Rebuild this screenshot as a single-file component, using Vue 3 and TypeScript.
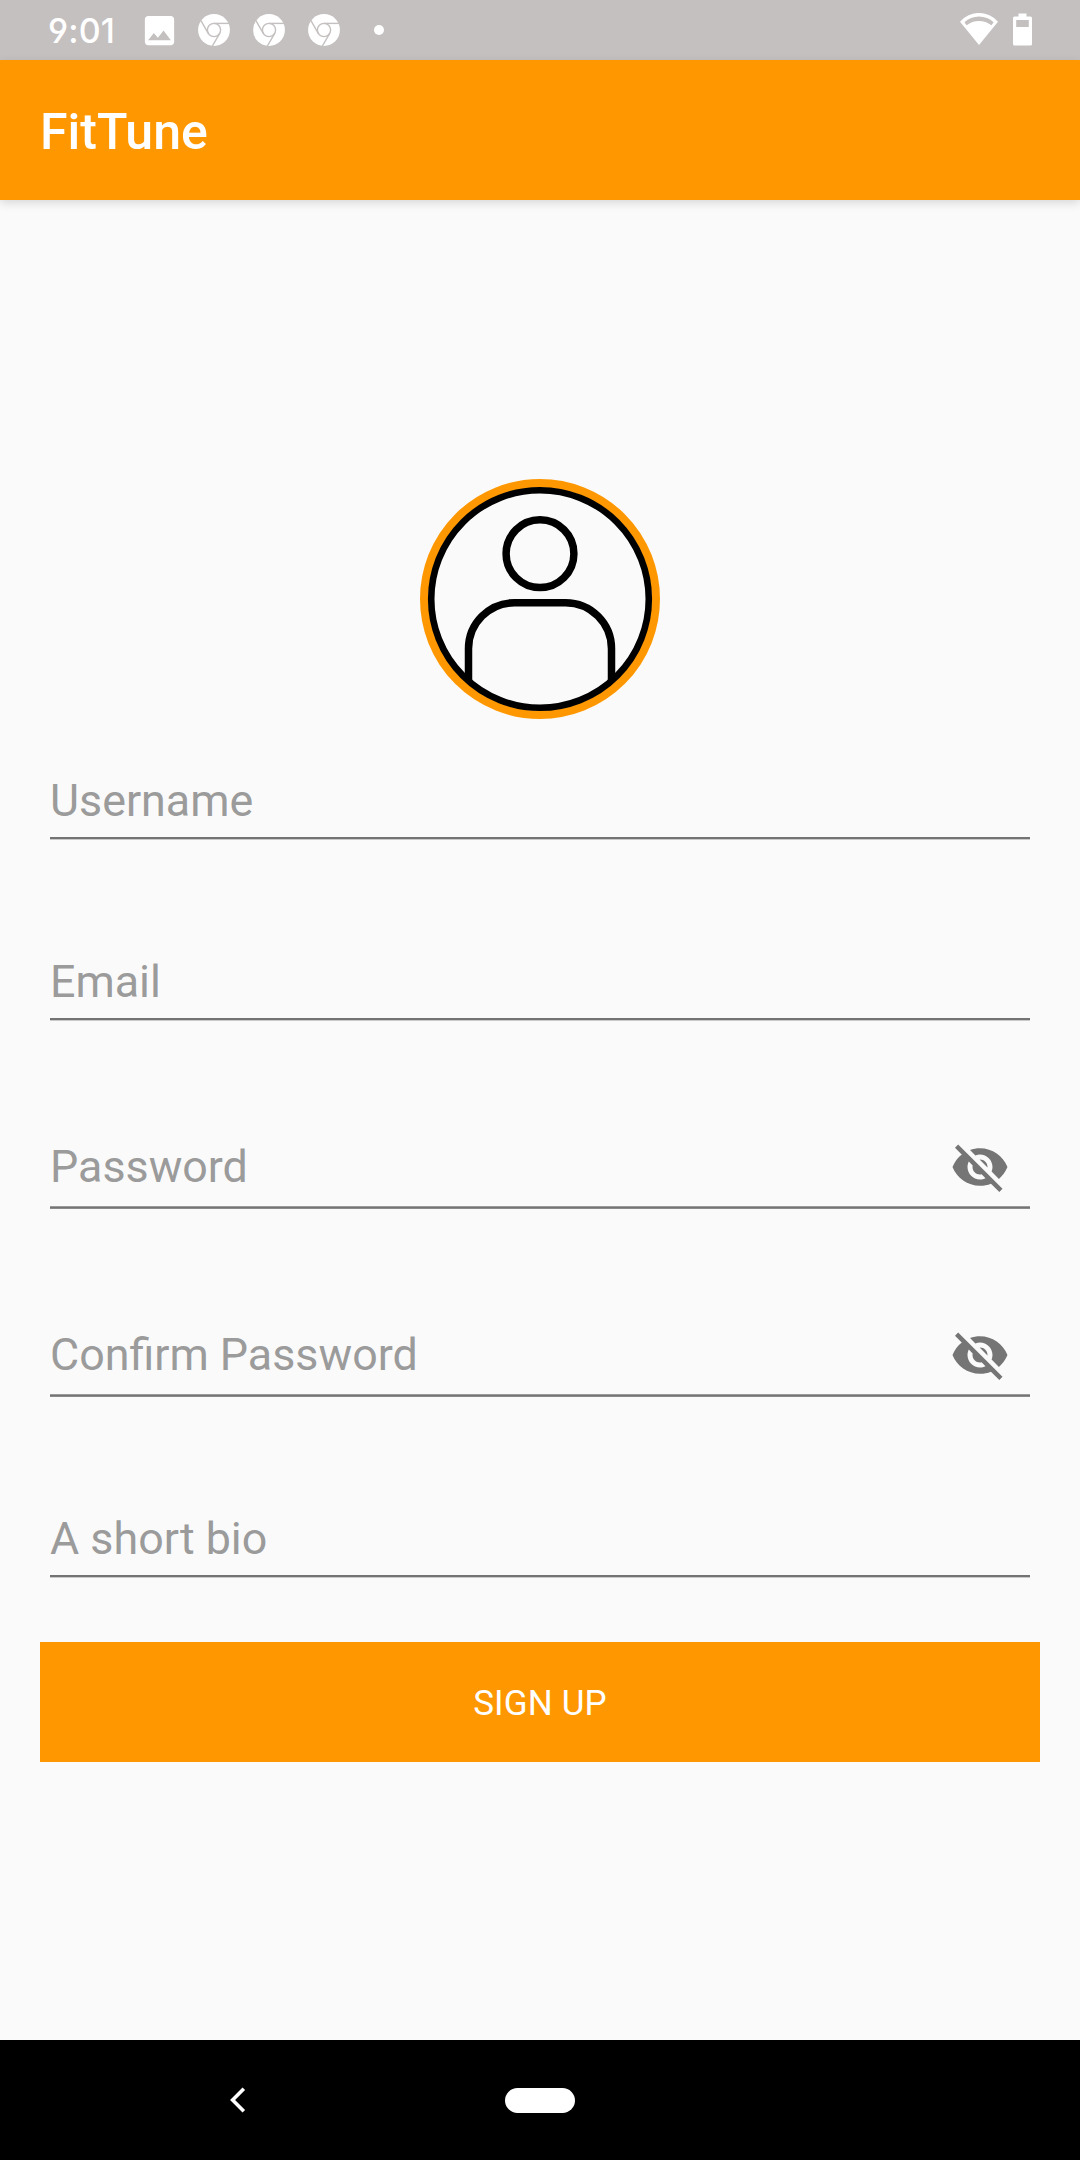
<script setup lang="ts">
interface Field {
  label: string
  secret: boolean
}

const fields: Field[] = [
  { label: 'Username', secret: false },
  { label: 'Email', secret: false },
  { label: 'Password', secret: true },
  { label: 'Confirm Password', secret: true },
  { label: 'A short bio', secret: false },
]

const browserNotifications: number[] = [1, 2, 3]
const spokes: number[] = [0, 120, 240]
</script>

<template>
  <div class="screen">
    <header class="status">
      <span class="time">9:01</span>
      <svg class="photo" viewBox="0 0 24 24">
        <path
          fill="#fff"
          d="M21 19V5c0-1.1-.9-2-2-2H5c-1.1 0-2 .9-2 2v14c0 1.1.9 2 2 2h14c1.1 0 2-.9 2-2zM8.5 13.5l2.5 3.01L14.5 12l4.5 6H5l3.5-4.5z"
        />
      </svg>
      <div class="browsers">
        <svg v-for="n in browserNotifications" :key="n" class="browser" viewBox="-16 -16 32 32">
          <circle r="15.9" fill="#fff" />
          <g fill="none" stroke="#c4c0bf" stroke-width="1.4">
            <circle r="6.6" />
            <path v-for="a in spokes" :key="a" d="M0-6.6H15" :transform="`rotate(${a})`" />
          </g>
        </svg>
      </div>
      <i class="dot"></i>
      <svg class="wifi" viewBox="0 0 38 32">
        <path
          fill="#fff"
          fill-rule="evenodd"
          d="M0 8.7A25 25 0 0 1 38 8.7L19 32ZM4.4 9.3L6.6 12.2A20 20 0 0 1 31.4 12.2L33.6 9.3A21 21 0 0 0 4.4 9.3Z"
        />
      </svg>
      <svg class="battery" viewBox="0 0 19 33">
        <path
          fill="#fff"
          fill-rule="evenodd"
          d="M5.5 .4H13.5V3.5H17.5Q19 3.5 19 5V31Q19 32.5 17.5 32.5H1.5Q0 32.5 0 31V5Q0 3.5 1.5 3.5H5.5ZM3.2 7V14H15.8V7Z"
        />
      </svg>
    </header>

    <div class="appbar"><h1>FitTune</h1></div>

    <main class="content">
      <svg class="avatar" viewBox="0 0 240 240">
        <defs>
          <clipPath id="face"><circle cx="120" cy="120" r="111" /></clipPath>
        </defs>
        <circle cx="120" cy="120" r="115.8" fill="none" stroke="#ff9800" stroke-width="8.4" />
        <g fill="none" stroke="#000">
          <g clip-path="url(#face)" stroke-width="7.5">
            <circle cx="120" cy="74.7" r="33.9" />
            <path d="M48.5 215V169.7A46 46 0 0 1 94.5 123.7H145.5A46 46 0 0 1 191.5 169.7V215" />
          </g>
          <circle cx="120" cy="120" r="108.8" stroke-width="6.6" />
        </g>
      </svg>

      <form class="form">
        <div v-for="f in fields" :key="f.label" class="field" :class="{ secret: f.secret }">
          <div class="row">
            <span class="label">{{ f.label }}</span>
            <svg v-if="f.secret" class="eye" viewBox="0 0 24 24">
              <path
                fill="#757575"
                d="M12 7c2.76 0 5 2.24 5 5 0 .65-.13 1.26-.36 1.83l2.92 2.92c1.51-1.26 2.7-2.89 3.43-4.75-1.73-4.39-6-7.5-11-7.5-1.4 0-2.74.25-3.98.7l2.16 2.16C10.74 7.13 11.35 7 12 7zM2 4.27l2.28 2.28.46.46C3.08 8.3 1.78 10.02 1 12c1.73 4.39 6 7.5 11 7.5 1.55 0 3.03-.3 4.38-.84l.42.42L19.73 22 21 20.73 3.27 3 2 4.27zM7.53 9.8l1.55 1.55c-.05.21-.08.43-.08.65 0 1.66 1.34 3 3 3 .22 0 .44-.03.65-.08l1.55 1.55c-.67.33-1.41.53-2.2.53-2.76 0-5-2.24-5-5 0-.79.2-1.53.53-2.2zm4.31-.78l3.15 3.15.02-.16c0-1.66-1.34-3-3-3l-.17.01z"
              />
            </svg>
          </div>
          <div class="line"></div>
        </div>
        <button type="button" class="submit">SIGN UP</button>
      </form>
    </main>

    <nav class="navbar">
      <svg class="back" viewBox="0 0 16 26">
        <path d="M13.8 1.8L2.6 13L13.8 24.2" fill="none" stroke="#fff" stroke-width="3.6" />
      </svg>
      <i class="home"></i>
    </nav>
  </div>
</template>

<style>
body {
  margin: 0;
}
</style>

<style scoped>
.screen {
  width: 1080px;
  height: 2160px;
  display: flex;
  flex-direction: column;
  background: #fafafa;
  font-family: Roboto, sans-serif;
  overflow: hidden;
}
svg {
  display: block;
  flex: none;
}
.status {
  flex: none;
  box-sizing: border-box;
  height: 60px;
  padding: 0 48px;
  display: flex;
  align-items: center;
  background: #c4c0bf;
}
.time {
  width: 92px;
  padding-top: 1px;
  color: #fff;
  font: 500 34px/40px Inter, sans-serif;
  font-feature-settings: 'cv04';
  letter-spacing: 0.1px;
  white-space: nowrap;
}
.photo {
  width: 39px;
  height: 39px;
}
.browsers {
  display: flex;
  gap: 23px;
  margin-left: 19px;
}
.browser {
  width: 32px;
  height: 32px;
}
.dot {
  width: 10px;
  height: 10px;
  margin-left: 34px;
  border-radius: 50%;
  background: #fff;
}
.wifi {
  width: 38px;
  height: 32px;
  margin-left: auto;
  margin-top: -2px;
}
.battery {
  width: 19px;
  height: 33px;
  margin-left: 15px;
  margin-top: -1px;
}
.appbar {
  flex: none;
  box-sizing: border-box;
  height: 140px;
  padding-left: 40px;
  display: flex;
  align-items: center;
  background: #ff9800;
  box-shadow: 0 3px 9px rgba(0, 0, 0, 0.14);
}
h1 {
  margin: 4px 0 0;
  color: #fff;
  font-size: 50px;
  line-height: 60px;
  font-weight: 500;
}
.content {
  flex: 1;
  display: flex;
  flex-direction: column;
  align-items: center;
  padding-top: 279px;
}
.avatar {
  width: 240px;
  height: 240px;
}
.form {
  width: 1000px;
}
.field {
  box-sizing: border-box;
  height: 181px;
  padding: 0 10px;
  display: flex;
  flex-direction: column;
  justify-content: flex-end;
}
.field:first-child {
  height: 121px;
}
.field.secret {
  height: 188px;
}
.row {
  display: flex;
  justify-content: space-between;
  align-items: center;
  padding-bottom: 10px;
}
.secret .row {
  padding: 0 20px 9px 0;
}
.label {
  color: #9b9b9b;
  font-size: 44.8px;
  line-height: 53px;
}
.secret .label {
  margin-bottom: 2px;
}
.eye {
  width: 60px;
  height: 60px;
}
.line {
  height: 3px;
  background: linear-gradient(#737373 0 2px, #c9c9c9 2px 3px);
}
.secret .line {
  background: linear-gradient(#9a9a9a 0 1px, #747474 1px 2px, #8a8a8a 2px 3px);
}
.submit {
  display: block;
  width: 1000px;
  height: 120px;
  margin: 64px 0 0;
  padding: 2px 0 0;
  border: 0;
  background: #ff9800;
  color: #fff;
  font: 400 35px/41px Roboto, sans-serif;
  letter-spacing: 0.15px;
}
.navbar {
  flex: none;
  box-sizing: border-box;
  height: 120px;
  padding-left: 230px;
  display: flex;
  align-items: center;
  background: #000;
}
.back {
  width: 16px;
  height: 26px;
}
.home {
  width: 70px;
  height: 25px;
  margin-left: 259px;
  border-radius: 13px;
  background: #fff;
}
</style>
